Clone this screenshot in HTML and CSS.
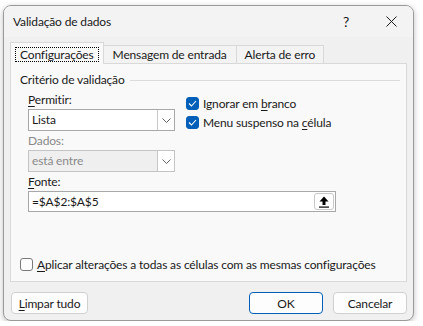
FILE: index.html
```html
<!DOCTYPE html>
<html lang="pt">
<head>
    <meta charset="UTF-8">
    <title>Validação de dados</title>
    <link rel="stylesheet" href="styles.css">
</head>
<body>
    <div class="window">
        <div class="titlebar">
            <span class="title">Validação de dados</span>
            <span class="help">?</span>
            <span class="close">
                <svg width="11" height="11" viewBox="0 0 11 11"><path d="M0.5 0.5 L10.5 10.5 M10.5 0.5 L0.5 10.5" stroke="#1a1a1a" stroke-width="1" fill="none"/></svg>
            </span>
        </div>

        <div class="tabs">
            <div class="tab active"><span class="focus">Configurações</span></div>
            <div class="tab">Mensagem de entrada</div>
            <div class="tab">Alerta de erro</div>
        </div>

        <div class="panel">
            <div class="group-title"><span>Critério de validação</span><div class="rule"></div></div>

            <div class="form-top">
                <div class="col-left">
                    <div class="label"><u>P</u>ermitir:</div>
                    <div class="select">
                        <span class="value">Lista</span>
                        <span class="drop"><svg width="9" height="5" viewBox="0 0 9 5"><path d="M0.5 0.5 L4.5 4.5 L8.5 0.5" stroke="#606060" fill="none"/></svg></span>
                    </div>
                    <div class="label disabled">Dados:</div>
                    <div class="select is-disabled">
                        <span class="value">está entre</span>
                        <span class="drop"><svg width="9" height="5" viewBox="0 0 9 5"><path d="M0.5 0.5 L4.5 4.5 L8.5 0.5" stroke="#606060" fill="none"/></svg></span>
                    </div>
                </div>
                <div class="col-right">
                    <label class="check"><span class="box on"><svg width="9" height="7" viewBox="0 0 9 7"><path d="M1 3.5 L3.5 6 L8 1" stroke="#fff" stroke-width="1.1" fill="none"/></svg></span><span>Ignorar em <u>b</u>ranco</span></label>
                    <label class="check"><span class="box on"><svg width="9" height="7" viewBox="0 0 9 7"><path d="M1 3.5 L3.5 6 L8 1" stroke="#fff" stroke-width="1.1" fill="none"/></svg></span><span>Menu suspenso na <u>c</u>élula</span></label>
                </div>
            </div>

            <div class="source">
                <div class="label"><u>F</u>onte:</div>
                <div class="input">
                    <span class="value">=$A$2:$A$5</span>
                    <span class="pick"><svg width="10" height="12" viewBox="0 0 10 12"><path d="M5 0.5 L9.5 5.5 L6.5 5.5 L6.5 9 L3.5 9 L3.5 5.5 L0.5 5.5 Z" fill="#000"/><rect x="0" y="10.5" width="10" height="1.2" fill="#000"/></svg></span>
                </div>
            </div>

            <label class="check apply"><span class="box"></span><span><u>A</u>plicar alterações a todas as células com as mesmas configurações</span></label>
        </div>

        <div class="footer">
            <button class="btn"><u>L</u>impar tudo</button>
            <div class="spacer"></div>
            <button class="btn default">OK</button>
            <button class="btn">Cancelar</button>
        </div>
    </div>
</body>
</html>
```

FILE: styles.css
```css
body {
    margin: 0;
    background-color: #ffffff;
    font-family: Lato, "Noto Sans", sans-serif;
    font-size: 12px;
    letter-spacing: -0.15px;
    color: #1a1a1a;
}
u {
    text-decoration-thickness: 1px;
    text-underline-offset: 2px;
}
.window {
    margin: 5px 0 0 3px;
    width: 409px;
    height: 314px;
    border: 1px solid #9a9a9a;
    border-radius: 8px;
    background-color: #f0f0f0;
    box-shadow: 0 2px 6px rgba(0, 0, 0, 0.25);
    display: flex;
    flex-direction: column;
    overflow: hidden;
}
.titlebar {
    height: 31px;
    display: flex;
    align-items: center;
    padding-left: 9px;
    background-color: #f3f3f3;
}
.title {
    flex: 1;
}
.help {
    width: 20px;
    text-align: center;
    font-size: 14px;
    margin-right: 25px;
}
.close {
    width: 20px;
    margin-right: 12px;
    display: flex;
    justify-content: center;
}
.tabs {
    display: flex;
    align-items: flex-end;
    height: 21px;
    margin: 5px 0 0 6px;
}
.tab {
    height: 18px;
    line-height: 17px;
    padding: 0 9px;
    border: 1px solid #d9d9d9;
    border-bottom: none;
    background-color: #f3f3f3;
    box-sizing: border-box;
}
.tab + .tab {
    border-left: none;
}
.tab:last-child {
    padding: 0 8px;
}
.tab.active {
    height: 22px;
    margin-bottom: -1px;
    padding: 4px 4px 0;
    background-color: #f9f9f9;
    position: relative;
    line-height: 14px;
}
.focus {
    display: block;
    border: 1px dotted #000;
    padding: 0 4px;
    line-height: 13px;
}
.panel {
    margin: 0 6px;
    height: 219px;
    border: 1px solid #d9d9d9;
    background-color: #f9f9f9;
    box-sizing: border-box;
    padding: 8px 6px 0 9px;
    display: flex;
    flex-direction: column;
}
.group-title {
    display: flex;
    align-items: center;
    line-height: 16px;
}
.rule {
    flex: 1;
    height: 1px;
    margin-left: 5px;
    background-color: #dcdcdc;
}
.form-top {
    display: flex;
    padding-left: 8px;
    margin-top: 4px;
}
.col-left {
    width: 147px;
}
.col-right {
    padding: 2px 0 0 11px;
}
.label {
    line-height: 16px;
    height: 17px;
}
.label.disabled {
    color: #8a8a8a;
    margin-top: 2px;
}
.select {
    height: 22px;
    border: 1px solid #a8a8a8;
    background-color: #ffffff;
    box-sizing: border-box;
    display: flex;
    align-items: stretch;
}
.select .value {
    flex: 1;
    padding-left: 3px;
    line-height: 20px;
}
.drop {
    width: 16px;
    border-left: 1px solid #c8c8c8;
    background-color: #ffffff;
    display: flex;
    align-items: center;
    justify-content: center;
}
.select.is-disabled {
    border-color: #c4c4c4;
    background-color: #efefef;
    color: #8a8a8a;
}
.check {
    display: flex;
    align-items: center;
    height: 19px;
    white-space: nowrap;
}
.box {
    width: 13px;
    height: 13px;
    flex: none;
    box-sizing: border-box;
    border: 1px solid #7a7a7a;
    border-radius: 3px;
    margin-right: 4px;
    background-color: #ffffff;
    display: flex;
    align-items: center;
    justify-content: center;
}
.box.on {
    background-color: #005fb8;
    border-color: #005fb8;
}
.source {
    padding-left: 8px;
    margin-top: 2px;
}
.input {
    width: 308px;
    height: 21px;
    border: 1px solid #a8a8a8;
    background-color: #ffffff;
    box-sizing: border-box;
    display: flex;
    align-items: center;
}
.input .value {
    flex: 1;
    padding-left: 3px;
}
.pick {
    width: 20px;
    height: 17px;
    margin-right: 1px;
    border: 1px solid #c8c8c8;
    border-radius: 3px;
    box-sizing: border-box;
    display: flex;
    align-items: center;
    justify-content: center;
}
.apply {
    margin-top: auto;
    margin-bottom: 7px;
}
.footer {
    display: flex;
    margin: 10px 6px 0 7px;
}
.spacer {
    flex: 1;
}
.btn {
    height: 22px;
    width: 74px;
    font-family: inherit;
    font-size: 12px;
    letter-spacing: -0.15px;
    color: #1a1a1a;
    background-color: #fdfdfd;
    border: 1px solid #d0d0d0;
    border-radius: 4px;
    padding: 0;
}
.btn:first-child {
    width: 77px;
}
.btn.default {
    border-color: #005fb8;
    margin-right: 10px;
}
```
